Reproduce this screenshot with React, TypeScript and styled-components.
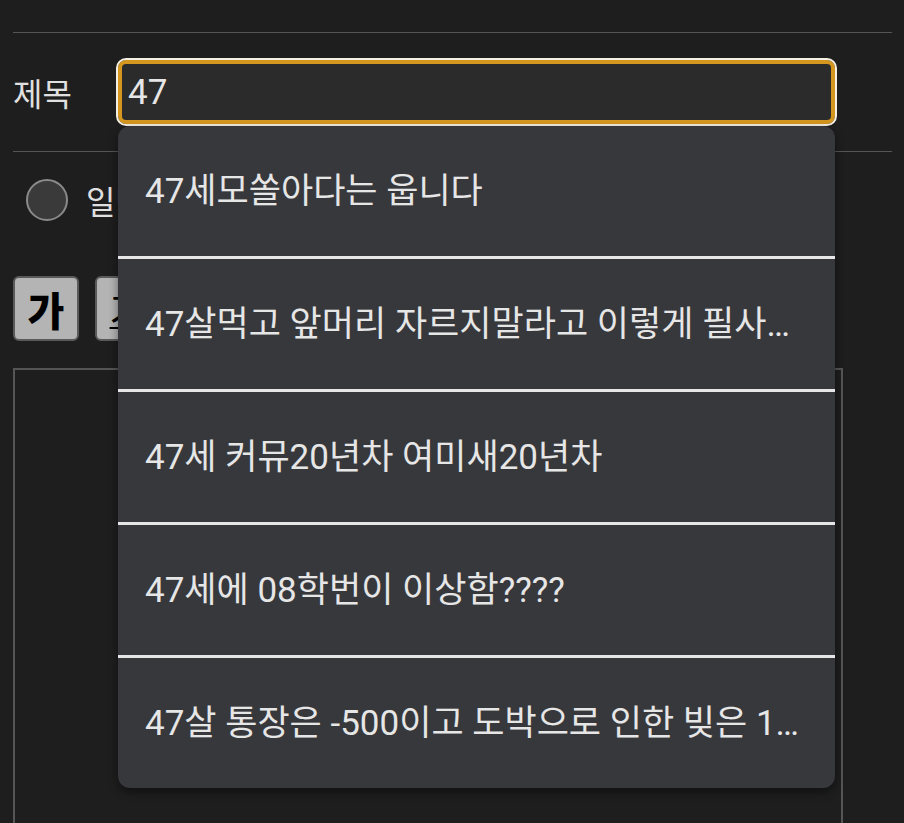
import React from "react";
import styled, { createGlobalStyle } from "styled-components";

const Global = createGlobalStyle`
  html, body { margin: 0; padding: 0; background: #1e1e1e; }
  body { font-family: Roboto, "Noto Sans CJK KR", sans-serif; color: #e6e6e6; overflow: hidden; }
`;

const Page = styled.div`
  padding: 32px 12px 0 13px;
  height: 823px;
  box-sizing: border-box;
  overflow: hidden;
`;

const Divider = styled.div`
  height: 1px;
  background: #555;
`;

const TitleRow = styled.div`
  display: flex;
  align-items: center;
  height: 118px;
`;

const Label = styled.div`
  width: 105px;
  font-size: 32px;
  color: #e0e0e0;
`;

const InputWrap = styled.div`
  position: relative;
  width: 717px;
  z-index: 2;
`;

const Input = styled.div`
  box-sizing: border-box;
  height: 64px;
  border: 4px solid #d4961f;
  border-radius: 8px;
  outline: 2px solid #f4efe2;
  background: #2b2b2b;
  display: flex;
  align-items: center;
  padding-left: 6px;
  font-size: 35px;
  color: #e6e6e6;
`;

const Dropdown = styled.ul`
  position: absolute;
  top: calc(100% + 2px);
  left: 0;
  width: 100%;
  margin: 0;
  padding: 0;
  list-style: none;
  background: #37383c;
  border-radius: 12px;
  box-shadow: 0 4px 10px rgba(0, 0, 0, 0.45);
  overflow: hidden;
`;

const Item = styled.li<{ $first?: boolean }>`
  box-sizing: border-box;
  height: ${(p) => (p.$first ? "130px" : "133px")};
  display: flex;
  align-items: center;
  padding: 0 27px 7px;
  border-top: ${(p) => (p.$first ? "none" : "3px solid #e6e6e6")};
  font-size: 35px;
  color: #e6e6e6;
  white-space: nowrap;
  overflow: hidden;
`;

const ItemText = styled.span`
  overflow: hidden;
  text-overflow: ellipsis;
  white-space: nowrap;
  display: block;
  max-width: 100%;
`;

const RadioRow = styled.div`
  display: flex;
  align-items: center;
  gap: 18px;
  height: 42px;
  padding: 27px 0 0 13px;
`;

const Radio = styled.span`
  box-sizing: border-box;
  width: 42px;
  height: 42px;
  border-radius: 50%;
  border: 2px solid #8a8a8a;
  background: #3a3a3a;
`;

const RadioLabel = styled.span`
  font-size: 32px;
  color: #e0e0e0;
`;

const Toolbar = styled.div`
  display: flex;
  gap: 16px;
  margin-top: 55px;
`;

const ToolButton = styled.div<{ $underline?: boolean; $bold?: boolean }>`
  box-sizing: border-box;
  width: 66px;
  height: 65px;
  border: 2px solid #5a5a5a;
  border-radius: 6px;
  background: #b4b4b4;
  color: #000;
  display: flex;
  align-items: center;
  justify-content: center;
  font-size: 40px;
  font-weight: ${(p) => (p.$bold ? 900 : 400)};
  text-decoration: ${(p) => (p.$underline ? "underline" : "none")};
  text-decoration-thickness: 2px;
`;

const Editor = styled.div`
  margin-top: 27px;
  width: 830px;
  height: 500px;
  box-sizing: border-box;
  border: 2px solid #555;
  background: #1e1e1e;
`;

const suggestions = [
  "47세모쏠아다는 웁니다",
  "47살먹고 앞머리 자르지말라고 이렇게 필사적으로 말렸는데",
  "47세 커뮤20년차 여미새20년차",
  "47세에 08학번이 이상함????",
  "47살 통장은 -500이고 도박으로 인한 빚은 1억 5천",
];

export default function App() {
  return (
    <>
      <Global />
      <Page>
        <Divider />
        <TitleRow>
          <Label>제목</Label>
          <InputWrap>
            <Input>47</Input>
            <Dropdown>
              {suggestions.map((s, i) => (
                <Item key={i} $first={i === 0}>
                  <ItemText>{s}</ItemText>
                </Item>
              ))}
            </Dropdown>
          </InputWrap>
        </TitleRow>
        <Divider />
        <RadioRow>
          <Radio />
          <RadioLabel>일반</RadioLabel>
        </RadioRow>
        <Toolbar>
          <ToolButton $bold>가</ToolButton>
          <ToolButton $underline>가</ToolButton>
        </Toolbar>
        <Editor />
      </Page>
    </>
  );
}
